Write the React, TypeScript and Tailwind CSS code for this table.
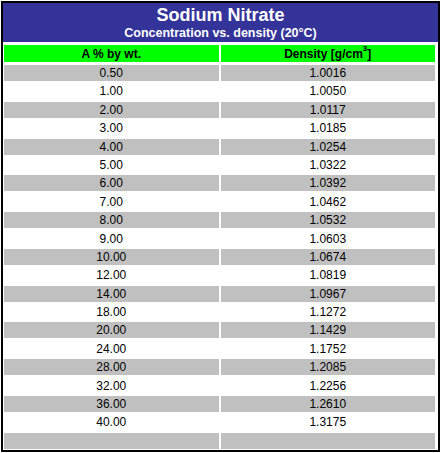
const rows: [string, string][] = [
  ['0.50', '1.0016'],
  ['1.00', '1.0050'],
  ['2.00', '1.0117'],
  ['3.00', '1.0185'],
  ['4.00', '1.0254'],
  ['5.00', '1.0322'],
  ['6.00', '1.0392'],
  ['7.00', '1.0462'],
  ['8.00', '1.0532'],
  ['9.00', '1.0603'],
  ['10.00', '1.0674'],
  ['12.00', '1.0819'],
  ['14.00', '1.0967'],
  ['18.00', '1.1272'],
  ['20.00', '1.1429'],
  ['24.00', '1.1752'],
  ['28.00', '1.2085'],
  ['32.00', '1.2256'],
  ['36.00', '1.2610'],
  ['40.00', '1.3175'],
  ['', ''],
]

export default function App() {
  return (
    <div className="w-[440px] h-[453px] bg-white font-['Liberation_Sans',Arial,sans-serif] text-black">
      <div className="ml-[1px] mt-[1px] w-[439px] h-[451px] border-2 border-black flex flex-col">
        {/* title */}
        <div className="h-[39px] bg-[#333399] text-white flex flex-col items-center pt-[2px]">
          <div className="text-[18px] font-bold leading-[21px]">Sodium Nitrate</div>
          <div className="text-[12.5px] font-bold leading-[15px]">Concentration vs. density (20°C)</div>
        </div>

        <div className="ml-[1px] mr-[3px] mt-[3px] grid grid-cols-2 gap-x-[2px]">
          <div className="h-[17px] bg-[#00ff00] flex items-center justify-center text-[12px] font-bold">A % by wt.</div>
          <div className="h-[17px] bg-[#00ff00] flex items-center justify-center text-[12px] font-bold">
            Density [g/cm<sup className="text-[8px] -top-[5px]">3</sup>]
          </div>
        </div>

        <div className="ml-[1px] mr-[3px] mt-[3px] flex flex-col gap-[2.4px]">
          {rows.map((r, i) => (
            <div key={i} className="grid grid-cols-2 gap-x-[2px] text-[12px] leading-[16px]">
              <div className={`h-[16px] text-center ${i % 2 === 0 ? 'bg-[#c0c0c0]' : 'bg-white'}`}>{r[0]}</div>
              <div className={`h-[16px] text-center ${i % 2 === 0 ? 'bg-[#c0c0c0]' : 'bg-white'}`}>{r[1]}</div>
            </div>
          ))}
        </div>
      </div>
    </div>
  )
}
